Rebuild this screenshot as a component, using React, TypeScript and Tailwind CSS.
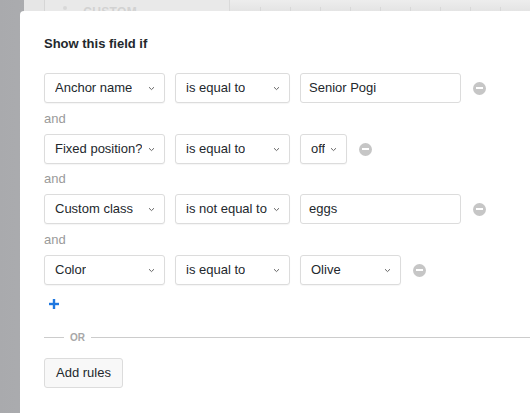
import React from 'react';

const font = { fontFamily: '"Liberation Sans", Arial, sans-serif' };

function Chevron() {
    return (
        <svg width="7" height="5" viewBox="0 0 7 5" className="shrink-0">
            <path d="M1 1.2 L3.5 3.6 L6 1.2" fill="none" stroke="#666" strokeWidth="1" />
        </svg>
    );
}

function Minus() {
    return (
        <div className="w-[13px] h-[13px] rounded-full bg-[#c6c6c6] flex items-center justify-center shrink-0">
            <div className="w-[7px] h-[2px] bg-white" />
        </div>
    );
}

function Select({ label, width }: { label: string; width: string }) {
    return (
        <div
            className={`${width} h-[30px] flex items-center justify-between pl-[10px] pr-[9px] border border-[#dcdcdc] rounded-[3px] bg-white shadow-[0_1px_1px_rgba(0,0,0,0.04)] text-[13px] text-[#23282d] shrink-0`}
        >
            <span className="whitespace-nowrap overflow-hidden">{label}</span>
            <Chevron />
        </div>
    );
}

function TextInput({ value }: { value: string }) {
    return (
        <div className="w-[161px] h-[30px] flex items-center px-[8px] border border-[#dcdcdc] rounded-[3px] bg-white text-[13px] text-[#23282d] shrink-0">
            {value}
        </div>
    );
}

function And({ short }: { short?: boolean }) {
    return (
        <div className={`${short ? 'h-[30px]' : 'h-[31px]'} flex items-center text-[13px] text-[#9a9a9a]`}>and</div>
    );
}

const rules = [
    { field: 'Anchor name', op: 'is equal to', kind: 'input', value: 'Senior Pogi' },
    { field: 'Fixed position?', op: 'is equal to', kind: 'select', value: 'off', w: 'w-[47px]' },
    { field: 'Custom class', op: 'is not equal to', kind: 'input', value: 'eggs' },
    { field: 'Color', op: 'is equal to', kind: 'select', value: 'Olive', w: 'w-[101px]' },
];

export default function App() {
    return (
        <div
            className="w-[530px] h-[413px] overflow-hidden flex flex-col bg-[linear-gradient(to_right,#a9aaad,#c9cacc)]"
            style={font}
        >
            {/* page behind the modal */}
            <div className="h-[11px] flex shrink-0">
                <div className="w-[26px]" />
                <div className="w-[24px] bg-[#e6e6e6] border-r border-[#d6d6d6]" />
                <div className="w-[202px] bg-[#e9e9e9] border-r border-[#dadada] overflow-hidden pl-[18px] flex gap-[16px]">
                    <span className="mt-[6px] w-[4px] h-[4px] bg-[#d8d8d8] rounded-full" />
                    <span className="mt-[6px] text-[12px] font-bold leading-[12px] text-[#d2d2d2] tracking-wide">CUSTOM</span>
                </div>
                <div className="flex-1 flex bg-[linear-gradient(to_bottom,#ededed,#e4e4e4)]">
                    {Array.from({ length: 10 }).map((_, i) => (
                        <div key={i} className="w-[30px] h-full flex items-end shrink-0">
                            <div className={`h-[4px] w-px ${i === 0 ? '' : 'bg-[#d8d8d8]'}`} />
                        </div>
                    ))}
                </div>
            </div>

            <div className="flex flex-1 min-h-0">
                <div className="w-[20px] shrink-0" />
                <div className="flex-1 bg-white rounded-tl-[4px] pl-[24px] pt-[25px]">
                    <h2 className="text-[13px] leading-[15px] font-bold text-[#23282d]">Show this field if</h2>

                    <div className="mt-[22px] flex flex-col">
                        {rules.map((r, i) => (
                            <React.Fragment key={r.field}>
                                {i > 0 && <And short={i === 2} />}
                                <div className="flex items-center gap-[10px]">
                                    <Select label={r.field} width="w-[121px]" />
                                    <Select label={r.op} width="w-[115px]" />
                                    {r.kind === 'input' ? (
                                        <TextInput value={r.value} />
                                    ) : (
                                        <Select label={r.value} width={r.w as string} />
                                    )}
                                    <div className="ml-[2px]">
                                        <Minus />
                                    </div>
                                </div>
                            </React.Fragment>
                        ))}
                    </div>

                    <div className="mt-[14px] pl-[5px]">
                        <svg width="10" height="10" viewBox="0 0 10 10">
                            <rect x="3.8" y="0" width="2.4" height="10" fill="#1f78e0" />
                            <rect x="0" y="3.8" width="10" height="2.4" fill="#1f78e0" />
                        </svg>
                    </div>

                    <div className="mt-[22px] h-[13px] flex items-center gap-[6px]">
                        <div className="w-[20px] h-px bg-[#cccccc]" />
                        <span className="text-[10px] font-bold text-[#a8a8a8] leading-[13px]">OR</span>
                        <div className="flex-1 h-px bg-[#cccccc]" />
                    </div>

                    <button className="mt-[14px] h-[30px] w-[79px] border border-[#dcdcdc] rounded-[3px] bg-[#f8f8f8] text-[13px] text-[#23282d] flex items-center justify-center">
                        Add rules
                    </button>
                </div>
            </div>
        </div>
    );
}
